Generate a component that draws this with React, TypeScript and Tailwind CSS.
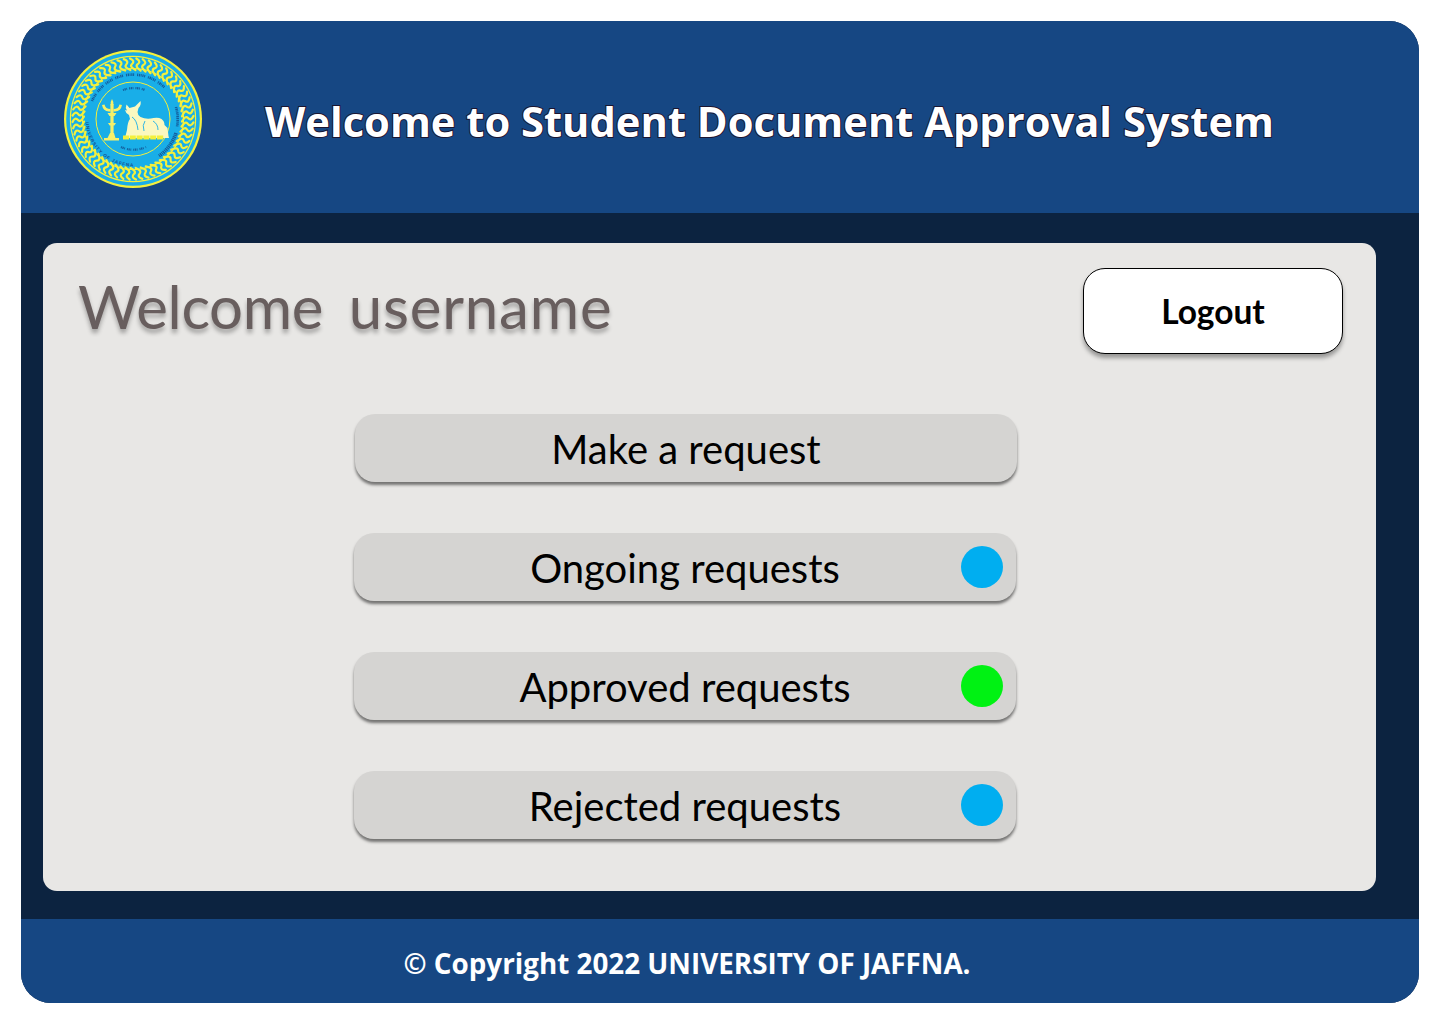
import React from "react";

const ropeTicks = Array.from({ length: 60 }, (_, i) => i * 6);

const Logo = () => (
  <svg width="140" height="140" viewBox="0 0 140 140" className="shrink-0 mt-[4px] ml-px">
    <defs>
      <path id="ringBottom" d="M 22.5 70 A 47.5 47.5 0 0 0 117.500 70" />
    </defs>
    <circle cx="70" cy="70" r="69" fill="#f4f03c" />
    <circle cx="70" cy="70" r="66.8" fill="#19aee8" />
    <circle cx="70" cy="70" r="63.2" fill="#f4f03c" />
    <circle cx="70" cy="70" r="62" fill="#19aee8" />
    <g stroke="#f4f03c" strokeWidth="2.2" fill="none" strokeLinecap="round">
      {ropeTicks.map((a) => (
        <path key={a} d="M 67 9.500 q 5.500 2.500 2 5.500 q -3 2.500 3.500 6" transform={`rotate(${a} 70 70)`} />
      ))}
    </g>
    <circle cx="70" cy="70" r="50.5" fill="none" stroke="#f4f03c" strokeWidth="1.2" />
    <circle cx="70" cy="70" r="37" fill="none" stroke="#f4f03c" strokeWidth="1" />
    {/* seal micro lettering */}
    <g fill="none" stroke="#14508f" strokeWidth="2.6" opacity="0.85">
      <path d="M 29 52 A 45 45 0 0 1 103 40" strokeDasharray="1 .7 1.4 .6 .8 .8 1.2 .6 1 3" />
      <path d="M 113 58 A 45 45 0 0 1 114 78" strokeDasharray="1 .7 1.4 .6" />
      <path d="M 113 84 A 45 45 0 0 1 96 107" strokeWidth="3.600" strokeDasharray="1.400 .6 1 .7" />
      <path d="M 60 41 A 32 32 0 0 1 82 41" strokeWidth="2.200" strokeDasharray="1 .6 1.300 .6 .8 2" />
      <path d="M 58 98 A 30 30 0 0 0 83 98" strokeWidth="2.200" strokeDasharray="1 .6 1.300 .6 .8 2" />
    </g>
    <text fontSize="4.6" fill="#14508f" fontFamily="Liberation Sans, sans-serif" fontWeight="700" letterSpacing="0.9">
      <textPath href="#ringBottom" startOffset="2%">UNIVERSITY OF JAFFNA</textPath>
    </text>
    {/* lamp */}
    <g fill="#f6f06a">
      <path d="M49 50 q2.200 3.500 1.300 6 h-2.600 q-.9 -2.500 1.300 -6z" />
      <path d="M39 56 q1 6 7 6.500 l1.500 0 v-2.500 q-5 0 -6 -4.500z M59 56 q-1 6 -7 6.500 l-1.500 0 v-2.500 q5 0 6 -4.500z" />
      <rect x="47.4" y="55" width="3.2" height="30" />
      <path d="M44.500 64 h9 l-2 3 h-5z M45 74 h8 l-1.600 2.500 h-4.800z" />
      <path d="M47 84 h4 l1.500 5 h3.500 v2.500 h-15 v-2.500 h3.500z" />
    </g>
    {/* bull */}
    <path
      fill="#fbf8c0"
      d="M66 66 q-3.500 -2 -4 -5 l2 .5 q-2 -3 -.5 -6 l3 3.500 l5.500 -1.500 l5.500 -5.500 q1 4 -2 7 l-1 4 q0 3 3 5 q6 3 13 1 q5 -1 8 1 q3 2 3 6 l3 3 l1 8 l.5 2 h-44 l2 -8 q.5 -8 3 -11z"
    />
    <path d="M69 68 q5 3 6 13 M82 72 q-3 4 -1 10 M90 72 q5 3 5 9" stroke="#19aee8" strokeWidth="0.9" fill="none" />
    <path d="M60 88.500 h41" stroke="#f4f03c" strokeWidth="4" strokeDasharray="6 .8" />
  </svg>
);

const MenuButton = ({ label, dot, className }: { label: string; dot?: string; className?: string }) => (
  <button
    className={`relative w-[662px] h-[68px] pt-[2px] flex items-center justify-center rounded-[20px] bg-[#d5d4d2] shadow-[0_3px_3px_rgba(0,0,0,0.5)] text-black text-[40px] leading-none font-['Lato',sans-serif] ${className ?? ""}`}
  >
    {label}
    {dot && <span className={`absolute right-[13px] top-[13px] w-[42px] h-[42px] rounded-full ${dot}`} />}
  </button>
);

export default function App() {
  return (
    <div className="min-h-[1024px] bg-white p-[21px] font-['Open_Sans',sans-serif]">
      <div className="w-[1398px] h-[982px] flex flex-col rounded-[30px] overflow-hidden bg-[#0c2340]">
        <header className="h-[192px] shrink-0 bg-[#164783] flex items-center pl-[41px]">
          <Logo />
          <h1 className="ml-[62px] mt-[8px] text-white text-[41.7px] leading-none font-bold [-webkit-text-stroke:2px_#1b1530] [paint-order:stroke_fill]">
            Welcome to Student Document Approval System
          </h1>
        </header>

        <main className="flex-1 px-[22px] pt-[30px]">
          <div className="w-[1333px] h-[648px] rounded-[14px] bg-[#e8e7e5] pl-[35px] pr-[33px] pt-[25px]">
            <div className="flex items-start justify-between">
              <h2 className="mt-[3px] text-[#685e5e] text-[60px] leading-[70px] font-['Lato',sans-serif] whitespace-pre [word-spacing:-2.5px] [text-shadow:0_4px_4px_rgba(0,0,0,0.3)]">
                <span className="tracking-[-0.4px]">Welcome</span>
                {"  "}
                <span className="tracking-[0.8px]">username</span>
              </h2>
              <button className="w-[260px] h-[86px] rounded-[22px] border border-black bg-white shadow-[0_4px_4px_rgba(0,0,0,0.35)] text-black text-[33.5px] font-bold font-['Lato',sans-serif]">
                Logout
              </button>
            </div>
            <div className="mt-[60px] ml-[276px] flex flex-col gap-[51px]">
              <MenuButton label="Make a request" className="ml-px" />
              <MenuButton label="Ongoing requests" dot="bg-[#00aef0]" />
              <MenuButton label="Approved requests" dot="bg-[#00f213]" />
              <MenuButton label="Rejected requests" dot="bg-[#00aef0]" />
            </div>
          </div>
        </main>

        <footer className="h-[84px] shrink-0 bg-[#164783] flex items-center justify-center pr-[66px]">
          <p className="text-white text-[27.8px] font-bold leading-none mt-[5px]">© Copyright 2022 UNIVERSITY OF JAFFNA.</p>
        </footer>
      </div>
    </div>
  );
}
